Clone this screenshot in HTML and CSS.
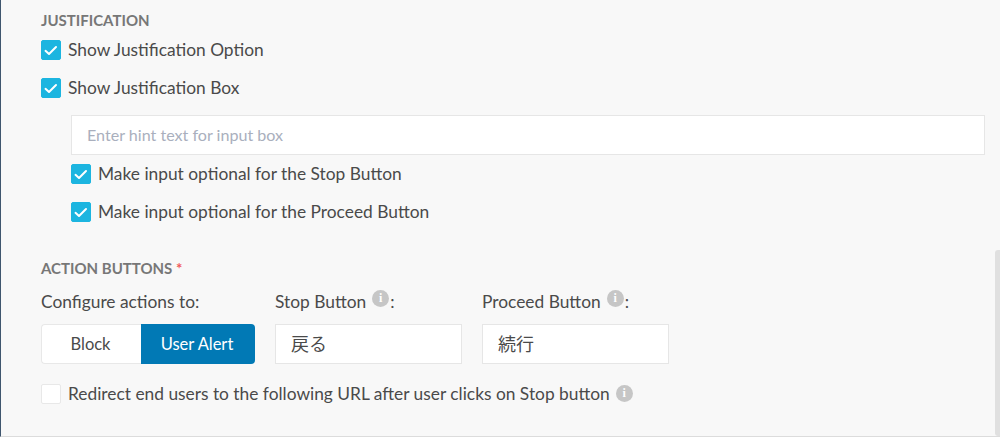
FILE: index.html
```html
<!DOCTYPE html>
<html lang="en">
<head>
<meta charset="utf-8">
<title>Justification</title>
<link rel="stylesheet" href="styles.css">
</head>
<body>
<main class="panel">
  <h2 class="heading first">JUSTIFICATION</h2>
  <label class="check check-a"><span class="box on"><svg viewBox="0 0 18 18"><path d="M3.5 9.8L7 13l7-7"/></svg></span>Show Justification Option</label>
  <label class="check check-b"><span class="box on"><svg viewBox="0 0 18 18"><path d="M3.5 9.8L7 13l7-7"/></svg></span>Show Justification Box</label>
  <div class="nested">
    <input class="hint" type="text" placeholder="Enter hint text for input box">
    <label class="check check-c"><span class="box on"><svg viewBox="0 0 18 18"><path d="M3.5 9.8L7 13l7-7"/></svg></span>Make input optional for the Stop Button</label>
    <label class="check check-d"><span class="box on"><svg viewBox="0 0 18 18"><path d="M3.5 9.8L7 13l7-7"/></svg></span>Make input optional for the Proceed Button</label>
  </div>
  <h2 class="heading second">ACTION BUTTONS <span class="req">*</span></h2>
  <div class="actions">
    <div class="col col-config">
      <div class="label">Configure actions to:</div>
      <div class="toggle"><span class="seg">Block</span><span class="seg active">User Alert</span></div>
    </div>
    <div class="col col-stop">
      <div class="label">Stop Button<span class="info">i</span>:</div>
      <input class="field" type="text" value="戻る">
    </div>
    <div class="col col-proceed">
      <div class="label">Proceed Button<span class="info">i</span>:</div>
      <input class="field" type="text" value="続行">
    </div>
  </div>
  <label class="check check-e"><span class="box"></span>Redirect end users to the following URL after user clicks on Stop button<span class="info info-end">i</span></label>
</main>
<div class="scrollbar"></div>
</body>
</html>
```
FILE: styles.css
```css
* { box-sizing: border-box; }
html, body { margin: 0; height: 437px; overflow: hidden; }
body {
  position: relative;
  background: #f8f8f8;
  font-family: Lato, "Noto Sans CJK JP", sans-serif;
  color: #4a4a4a;
}
.panel {
  height: 437px;
  padding: 0 15px 0 40px;
  border-left: 1px solid #3f566e;
  border-bottom: 1px solid #dcdcdc;
}
.heading {
  margin: 0;
  font-size: 15px;
  line-height: 17px;
  font-weight: 700;
  color: #777;
}
.heading.first { padding-top: 12px; }
.heading.second { margin-top: 37.5px; }
.req { color: #f0585c; }
.check {
  display: flex;
  align-items: center;
  font-size: 17.35px;
  line-height: 20px;
  height: 20px;
}
.check-a { margin-top: 11.4px; }
.check-b { margin-top: 17.6px; }
.check-c { margin-top: 9.5px; }
.check-d { margin-top: 18px; }
.check-e { margin-top: 20px; }
.box {
  flex: none;
  width: 20px;
  height: 20px;
  margin-right: 7px;
  border-radius: 2px;
  background: #fff;
  border: 1px solid #e8e8e8;
}
.box.on { background: #1cb5e0; border-color: #1cb5e0; }
.box svg { display: block; width: 18px; height: 18px; }
.box path { fill: none; stroke: #fff; stroke-width: 2; stroke-linecap: round; stroke-linejoin: round; }
.nested { padding-left: 30px; margin-top: 17px; }
.hint {
  display: block;
  width: 914px;
  height: 40px;
  padding: 0 15px;
  border: 1px solid #e6e6e6;
  background: #fff;
  font: 16.1px Lato, sans-serif;
  outline: none;
}
.hint::placeholder { color: #a9afbd; opacity: 1; }
.actions { display: flex; margin-top: 15px; }
.col-config { width: 234px; }
.col-stop { width: 207px; }
.label {
  display: flex;
  align-items: center;
  height: 20px;
  font-size: 17.35px;
  line-height: 20px;
  margin-bottom: 12px;
}
.info {
  display: inline-block;
  width: 17px;
  height: 17px;
  margin: -6px 1px 0 6px;
  border-radius: 50%;
  background: #c6c6c6;
  color: #fff;
  font: 700 12px/17px "Liberation Serif", serif;
  text-align: center;
}
.info-end { margin: 0 0 0 6px; }
.toggle { display: flex; width: 214px; height: 40px; }
.seg {
  display: flex;
  align-items: center;
  justify-content: center;
  padding-right: 2px;
  font-size: 16.5px;
}
.seg:first-child {
  width: 100px;
  background: #fff;
  border: 1px solid #e8e8e8;
  border-right: 0;
  border-radius: 4px 0 0 4px;
}
.seg.active {
  width: 114px;
  background: #0179b5;
  color: #fff;
  border-radius: 0 4px 4px 0;
}
.field {
  display: block;
  width: 187px;
  height: 40px;
  padding: 0 15px 2px;
  border: 1px solid #e6e6e6;
  background: #fff;
  color: #4a4a4a;
  font: 18px "Noto Sans CJK JP", sans-serif;
  outline: none;
}
.scrollbar {
  position: absolute;
  top: 250px;
  right: 0;
  width: 5px;
  height: 186px;
  border-radius: 3px 0 0 3px;
  background: #e0e0e0;
}
```
